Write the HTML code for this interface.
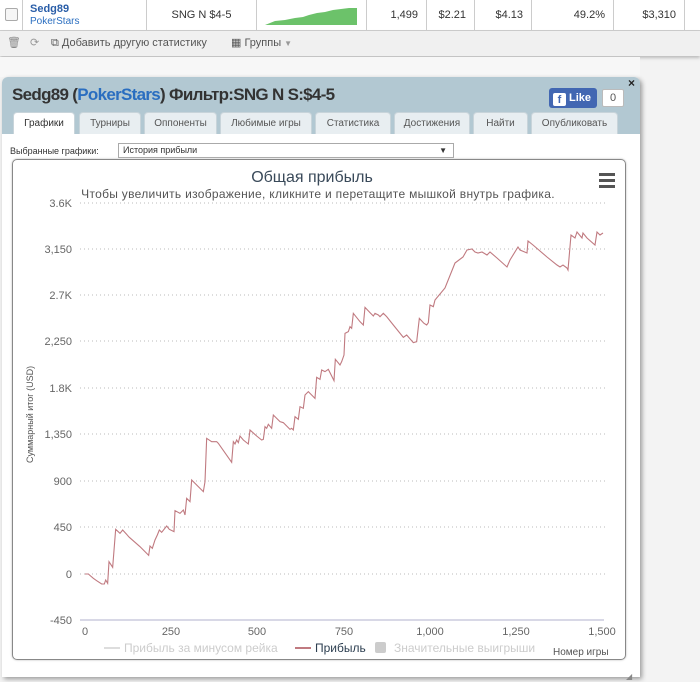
<!DOCTYPE html>
<html><head><meta charset="utf-8"><style>
*{margin:0;padding:0;box-sizing:border-box}
body{width:700px;height:682px;overflow:hidden;background:#f3f3f3;font-family:"Liberation Sans",sans-serif;position:relative}
.abs{position:absolute}
.row{left:0;top:0;width:700px;height:31px;background:#fff;border-bottom:1px solid #ccc}
.cell{position:absolute;top:0;height:30px;border-left:1px solid #ccc;font-size:11px;color:#333;line-height:30px;text-align:right;padding-right:8px}
.tb{left:0;top:31px;width:700px;height:25px;background:#f0f0f0;box-shadow:0 2px 3px #bbb;font-size:11px;color:#555;line-height:25px}
.dlg{left:2px;top:77px;width:638px;height:600px;background:#fff;border-radius:6px 6px 0 0;box-shadow:2px 2px 5px #999}
.hdr{left:0;top:0;width:638px;height:57px;background:#b2c8d2;border-radius:6px 6px 0 0}
.tab{position:absolute;top:35px;height:22px;background:#e8eef1;border:1px solid #c8d4da;border-bottom:none;border-radius:4px 4px 0 0;font-size:10px;color:#555;text-align:center;line-height:21px}
</style></head><body>
<div class="abs row">
 <div class="abs" style="left:5px;top:8px;width:13px;height:13px;border:1px solid #aaa;border-radius:2px;background:#f6f6f6"></div>
 <div class="cell" style="left:22px;width:124px;text-align:left;padding-left:7px;line-height:12px;padding-top:3px"><b style="color:#2a5ea8;font-size:11px">Sedg89</b><br><span style="color:#2a6ec0;font-size:10px">PokerStars</span></div>
 <div class="cell" style="left:146px;width:110px;text-align:center;padding:0">SNG N $4-5</div>
 <div class="cell" style="left:256px;width:110px"><svg class="abs" style="left:8px;top:7px" width="92" height="18"><path d="M0 18 L10 14 L20 13 L30 11 L38 10 L44 8 L52 6 L60 5 L68 3 L76 2 L84 1 L92 1 L92 18Z" fill="#6cc26a"/></svg></div>
 <div class="cell" style="left:366px;width:60px">1,499</div>
 <div class="cell" style="left:426px;width:48px">$2.21</div>
 <div class="cell" style="left:474px;width:57px">$4.13</div>
 <div class="cell" style="left:531px;width:82px">49.2%</div>
 <div class="cell" style="left:613px;width:71px">$3,310</div>
 <div class="cell" style="left:684px;width:16px"></div>
</div>
<div class="abs tb"><span style="position:absolute;left:7px;color:#888">🗑</span><span style="position:absolute;left:30px;color:#999">⟳</span><span style="position:absolute;left:51px">⧉ Добавить другую статистику</span><span style="position:absolute;left:231px">▦ Группы <span style="font-size:8px;color:#999">▼</span></span></div>
<div class="abs" style="left:0;top:57px;width:640px;height:20px;background:#f7f7f7"></div>
<div class="abs dlg">
 <div class="abs hdr">
  <div class="abs" style="left:10px;top:8px;font-size:17px;font-weight:bold;color:#333;letter-spacing:-0.7px">Sedg89 (<span style="color:#2a6ec0">PokerStars</span>) Фильтр:SNG N S:$4-5</div>
  <div class="abs" style="left:547px;top:11px;width:48px;height:20px;background:#4267b2;border-radius:3px;color:#fff;font-size:11px;font-weight:bold;line-height:20px;padding-left:4px"><span style="display:inline-block;width:13px;height:13px;background:#fff;color:#4267b2;text-align:center;line-height:14px;border-radius:2px;margin-right:3px;vertical-align:-2px">f</span>Like</div>
  <div class="abs" style="left:600px;top:12px;width:22px;height:18px;background:#fff;border:1px solid #bbb;border-radius:2px;font-size:11px;color:#555;text-align:center;line-height:17px">0</div>
  <div class="abs" style="left:626px;top:-1px;font-size:12px;font-weight:bold;color:#222">×</div>
  <div class="tab" style="left:11px;width:62px;background:#fff;color:#333">Графики</div>
  <div class="tab" style="left:77px;width:62px">Турниры</div>
  <div class="tab" style="left:142px;width:73px">Оппоненты</div>
  <div class="tab" style="left:218px;width:92px">Любимые игры</div>
  <div class="tab" style="left:313px;width:76px">Статистика</div>
  <div class="tab" style="left:392px;width:76px">Достижения</div>
  <div class="tab" style="left:471px;width:55px">Найти</div>
  <div class="tab" style="left:529px;width:87px">Опубликовать</div>
 </div>
 <div class="abs" style="left:8px;top:69px;font-size:9px;color:#333">Выбранные графики:</div>
 <div class="abs" style="left:116px;top:66px;width:336px;height:15px;border:1px solid #aaa;font-size:9px;color:#333;line-height:13px;padding-left:4px">История прибыли<span style="position:absolute;right:6px;font-size:8px">▼</span></div>
 <div class="abs" style="left:10px;top:82px;width:614px;height:501px;border:1px solid #888;border-radius:5px;box-shadow:0 0 2px #bbb"></div>
 <div class="abs" style="left:624px;top:595px;font-size:8px;color:#888">◢</div>
</div>
<svg class="abs" style="left:0;top:0" width="700" height="682">
 <g font-family="Liberation Sans, DejaVu Sans, sans-serif">
 <text x="312" y="182" font-size="16" fill="#3a4a5a" text-anchor="middle">Общая прибыль</text>
 <text x="318" y="198" font-size="12" fill="#555" text-anchor="middle" letter-spacing="0.3">Чтобы увеличить изображение, кликните и перетащите мышкой внутрь графика.</text>
 <g fill="#555"><rect x="599" y="173" width="16" height="3"/><rect x="599" y="179" width="16" height="3"/><rect x="599" y="185" width="16" height="3"/></g>
 <g stroke="#bbb" stroke-dasharray="1,3">
  <line x1="80" x2="606" y1="203" y2="203"/><line x1="80" x2="606" y1="249" y2="249"/><line x1="80" x2="606" y1="295" y2="295"/><line x1="80" x2="606" y1="341" y2="341"/><line x1="80" x2="606" y1="388" y2="388"/><line x1="80" x2="606" y1="434" y2="434"/><line x1="80" x2="606" y1="481" y2="481"/><line x1="80" x2="606" y1="527" y2="527"/><line x1="80" x2="606" y1="574" y2="574"/>
 </g>
 <line x1="80" x2="604" y1="620" y2="620" stroke="#ccd" stroke-width="1.5"/>
 <g font-size="11" fill="#666" text-anchor="end">
  <text x="72" y="207">3.6K</text><text x="72" y="253">3,150</text><text x="72" y="299">2.7K</text><text x="72" y="345">2,250</text><text x="72" y="392">1.8K</text><text x="72" y="438">1,350</text><text x="72" y="485">900</text><text x="72" y="531">450</text><text x="72" y="578">0</text><text x="72" y="624">-450</text>
 </g>
 <g font-size="11" fill="#666" text-anchor="middle">
  <text x="85" y="635">0</text><text x="171" y="635">250</text><text x="257" y="635">500</text><text x="344" y="635">750</text><text x="430" y="635">1,000</text><text x="516" y="635">1,250</text><text x="602" y="635">1,500</text>
 </g>
 <text transform="translate(33,463) rotate(-90)" font-size="9" fill="#555">Суммарный итог (USD)</text>
 <g transform="translate(70,300) scale(0.33333)"><polyline fill="none" stroke="#c07a80" stroke-width="1.1" vector-effect="non-scaling-stroke" points="45,822 55,822 70,835 80,842 95,852 103,852 107,840 113,850 117,785 128,802 137,688 150,700 158,690 178,712 210,740 236,766 240,738 247,745 255,720 262,705 268,690 275,697 290,678 298,688 312,695 315,632 330,640 340,630 345,645 350,595 360,605 365,540 380,555 400,575 405,545 410,415 425,425 440,425 445,430 485,487 490,425 495,432 500,420 505,428 510,408 520,420 535,432 540,390 560,408 575,420 580,418 585,380 590,385 595,373 605,385 610,345 630,365 640,368 660,388 665,385 670,390 675,350 685,358 690,320 700,325 705,285 715,275 725,285 735,295 740,232 750,238 755,210 765,215 775,208 792,242 796,178 810,195 815,185 822,165 825,100 835,95 840,80 845,85 850,40 870,65 880,75 885,22 900,38 910,48 915,40 925,45 930,50 940,40 950,50 970,75 1000,112 1010,105 1030,128 1040,125 1048,55 1062,70 1070,75 1075,68 1080,15 1090,20 1095,0 1125,-36 1155,-111 1179,-129 1191,-150 1206,-153 1215,-144 1224,-141 1236,-144 1251,-135 1260,-144 1281,-126 1311,-99 1320,-120 1344,-159 1350,-150 1371,-141 1374,-177 1389,-165 1431,-129 1461,-105 1470,-99 1479,-105 1491,-96 1494,-90 1503,-195 1515,-186 1521,-204 1536,-186 1539,-201 1551,-186 1575,-165 1581,-204 1590,-195 1599,-201"/></g>
 <g font-size="12">
  <line x1="104" x2="120" y1="648" y2="648" stroke="#ddd" stroke-width="2"/><text x="124" y="652" fill="#ccc">Прибыль за минусом рейка</text>
  <line x1="295" x2="311" y1="648" y2="648" stroke="#c07a80" stroke-width="2"/><text x="315" y="652" fill="#2c3e50">Прибыль</text>
  <rect x="375" y="642" width="11" height="11" fill="#ccc" rx="2"/><text x="394" y="652" fill="#ccc">Значительные выигрыши</text>
  <text x="553" y="655" font-size="10" fill="#555">Номер игры</text>
 </g>
 </g>
</svg>
</body></html>
